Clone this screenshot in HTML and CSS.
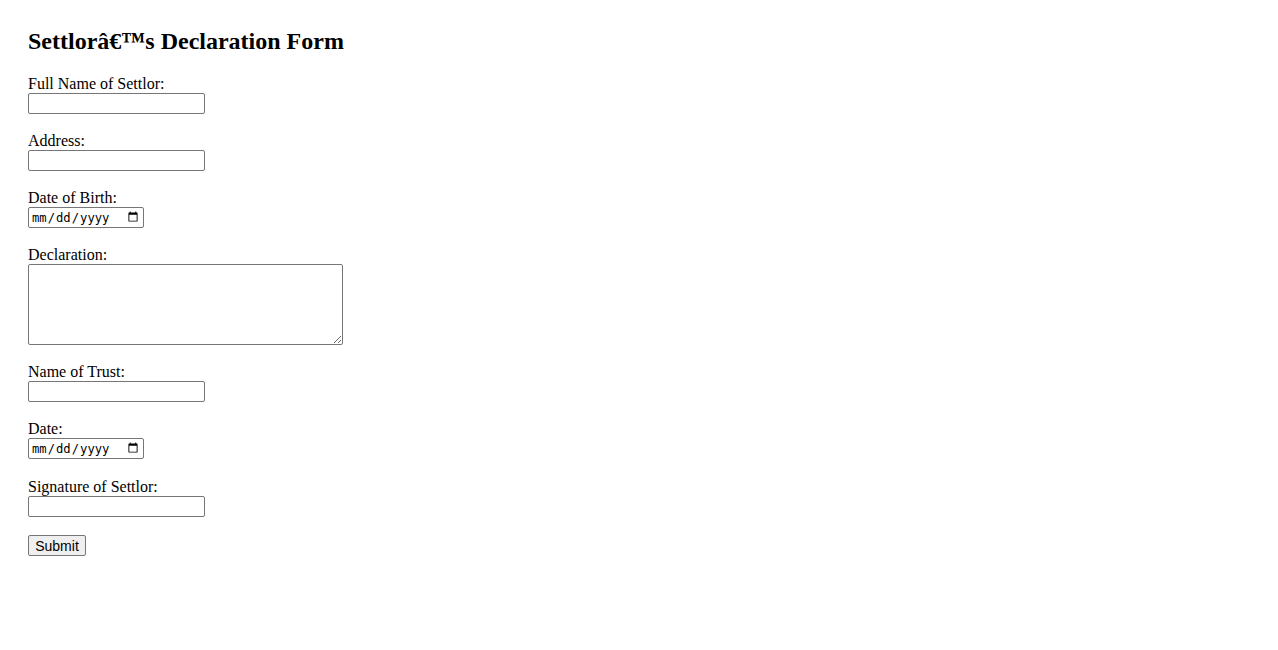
FILE: index.html
```html
<!DOCTYPE html>
<html lang="en">
<head>
<meta charset="utf-8">
<title>Settlor's Declaration Form</title>
<link rel="stylesheet" href="styles.css">
</head>
<body>
<div class="page">
  <h2 class="title">Settlorâ€™s Declaration Form</h2>
  <form class="form">
    <div class="field">
      <label class="label" for="fullname">Full Name of Settlor:</label>
      <input class="text" type="text" id="fullname">
    </div>
    <div class="field">
      <label class="label" for="address">Address:</label>
      <input class="text" type="text" id="address">
    </div>
    <div class="field">
      <label class="label" for="dob">Date of Birth:</label>
      <input class="date" type="date" id="dob">
    </div>
    <div class="field">
      <label class="label" for="decl">Declaration:</label>
      <textarea class="area" id="decl"></textarea>
    </div>
    <div class="field">
      <label class="label" for="trust">Name of Trust:</label>
      <input class="text" type="text" id="trust">
    </div>
    <div class="field field-wide-gap">
      <label class="label" for="date">Date:</label>
      <input class="date" type="date" id="date">
    </div>
    <div class="field">
      <label class="label" for="sig">Signature of Settlor:</label>
      <input class="text" type="text" id="sig">
    </div>
    <div class="field">
      <button class="submit" type="submit">Submit</button>
    </div>
  </form>
</div>
</body>
</html>
```

FILE: styles.css
```css
html, body {
  background: #ffffff;
}
body {
  margin: 8px;
  font-family: "Liberation Serif", "Times New Roman", serif;
  font-size: 16px;
  color: #000000;
}
.page {
  padding: 20px;
}
.title {
  margin: 0 0 20px 0;
  font-size: 24px;
  font-weight: bold;
  line-height: 27px;
}
.form {
  margin: 0;
}
.field {
  margin-bottom: 18px;
}
.field-wide-gap {
  margin-bottom: 19px;
}
.label {
  display: block;
  line-height: 18px;
}
.text, .date, .area {
  display: block;
  box-sizing: border-box;
  margin: 0;
  border: 1px solid #767676;
  border-radius: 2px;
  background: #ffffff;
}
.text {
  width: 177px;
  height: 21px;
  padding: 1px 2px;
  font-family: "Liberation Sans", Arial, sans-serif;
  font-size: 13.33px;
}
.date {
  width: 116px;
  height: 21px;
  padding: 1px 2px;
  font-family: "DejaVu Sans Mono", "Liberation Mono", monospace;
  font-size: 12.2px;
  color: #000000;
}
.area {
  width: 315px;
  height: 81px;
  padding: 2px;
  resize: both;
  font-family: "Liberation Mono", monospace;
  font-size: 13.33px;
}
.submit {
  display: block;
  box-sizing: border-box;
  margin: 0;
  width: 58px;
  height: 21px;
  padding: 1px 6px;
  font-family: "Liberation Sans", Arial, sans-serif;
  font-size: 14px;
  color: #000000;
  background: #efefef;
  border: 1px solid #767676;
  border-radius: 2px;
}
```
